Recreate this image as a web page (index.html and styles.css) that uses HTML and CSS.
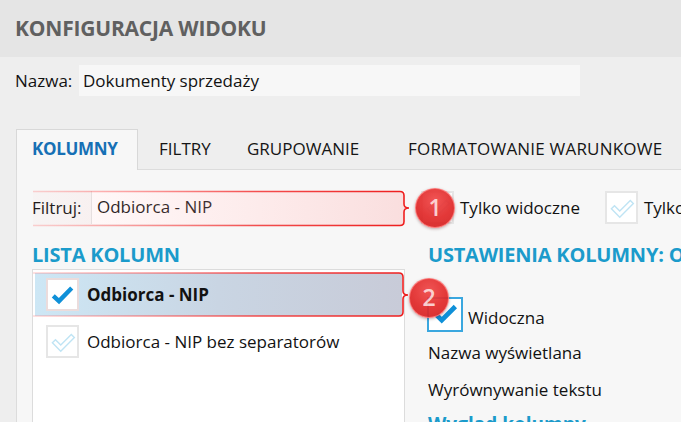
FILE: index.html
```html
<!DOCTYPE html>
<html lang="pl">
<head>
<meta charset="utf-8">
<title>Konfiguracja widoku</title>
<link rel="stylesheet" href="styles.css">
</head>
<body>
<div class="header"><h1 class="title">KONFIGURACJA WIDOKU</h1></div>

<div class="name-row">
  <span class="name-label">Nazwa:</span>
  <div class="name-input">Dokumenty sprzedaży</div>
</div>

<div class="tabs">
  <div class="tab tab-active">KOLUMNY</div>
  <div class="tab tab-2">FILTRY</div>
  <div class="tab tab-3">GRUPOWANIE</div>
  <div class="tab tab-4">FORMATOWANIE WARUNKOWE</div>
</div>

<div class="panel">
  <div class="grid">
    <div class="filter">
      <span class="filter-label">Filtruj:</span>
      <div class="filter-input">Odbiorca - NIP</div>
    </div>
    <div class="opts">
      <span class="cb cb-off"><svg viewBox="0 0 33 33" width="29" height="29"><polygon points="5,18 8.5,14.5 14.5,20.5 26.5,8.5 30,12 14.5,27.5" class="hollow"/></svg></span>
      <span class="opt-text">Tylko widoczne</span>
      <span class="cb cb-off cb-second"><svg viewBox="0 0 33 33" width="29" height="29"><polygon points="5,18 8.5,14.5 14.5,20.5 26.5,8.5 30,12 14.5,27.5" class="hollow"/></svg></span>
      <span class="opt-text">Tylko</span>
    </div>

    <h2 class="section">LISTA KOLUMN</h2>
    <h2 class="section section-right">USTAWIENIA KOLUMNY: ODBIORCA - NIP</h2>

    <div class="list">
      <div class="row row-selected">
        <span class="cb cb-on"><svg viewBox="0 0 33 33" width="29" height="29"><polyline points="6,18 12.5,24 27,9" class="solid"/></svg></span>
        <span class="row-text row-text-bold">Odbiorca - NIP</span>
      </div>
      <div class="row row-plain">
        <span class="cb cb-off"><svg viewBox="0 0 33 33" width="29" height="29"><polygon points="5,18 8.5,14.5 14.5,20.5 26.5,8.5 30,12 14.5,27.5" class="hollow"/></svg></span>
        <span class="row-text">Odbiorca - NIP bez separatorów</span>
      </div>
    </div>

    <div class="settings">
      <div class="set-check">
        <span class="cb cb-blue"><svg viewBox="0 0 33 33" width="31" height="31"><polyline points="7,17 12.5,22.5 27,8" class="solid"/></svg></span>
        <span class="opt-text set-check-text">Widoczna</span>
      </div>
      <div class="set-line">Nazwa wyświetlana</div>
      <div class="set-line">Wyrównywanie tekstu</div>
      <h3 class="subsection">Wygląd kolumny</h3>
    </div>
  </div>

  <svg class="mark mark-1" width="382" height="40" viewBox="0 0 382 40">
    <defs>
      <linearGradient id="stroke1" x1="0" x2="1" y1="0" y2="0">
        <stop offset="0" stop-color="#ff5a5a" stop-opacity="0.25"/>
        <stop offset="0.6" stop-color="#f23030" stop-opacity="0.85"/>
        <stop offset="1" stop-color="#ee1c1c"/>
      </linearGradient>
      <linearGradient id="fill1" x1="0" x2="1" y1="0" y2="0">
        <stop offset="0" stop-color="#ffb5b5" stop-opacity="0.05"/>
        <stop offset="1" stop-color="#f0a0a0" stop-opacity="0.35"/>
      </linearGradient>
    </defs>
    <path d="M0 1.5 H367 Q371 1.5 371 5.5 V14 Q371 18 376 18 Q371 18 371 22 V31.5 Q371 35.5 367 35.5 H0" fill="url(#fill1)" stroke="url(#stroke1)" stroke-width="1.6"/>
  </svg>

  <svg class="mark mark-2" width="382" height="48" viewBox="0 0 382 48">
    <path d="M0 2 H366 Q370 2 370 6 V20 Q370 24 375 24 Q370 24 370 28 V41 Q370 45 366 45 H0" fill="none" stroke="url(#stroke1)" stroke-width="1.6"/>
  </svg>

  <div class="callout callout-1">1</div>
  <div class="callout callout-2">2</div>
</div>
</body>
</html>
```

FILE: styles.css
```css
* { box-sizing: border-box; }

html, body {
  margin: 0;
  width: 681px;
  height: 422px;
  overflow: hidden;
}

body {
  background: #eeeeee;
  font-family: "Open Sans", "Noto Sans", sans-serif;
  font-size: 17px;
  color: #121212;
}

.header {
  height: 57px;
  background: #e5e5e5;
  padding: 15px 0 0 15px;
}

.title {
  margin: 0;
  font-size: 21px;
  line-height: 26px;
  font-weight: 700;
  color: #606060;
  letter-spacing: -0.2px;
}

.name-row {
  display: flex;
  align-items: center;
  height: 31px;
  margin-top: 8px;
  padding-left: 15px;
}

.name-label { width: 64px; }

.name-input {
  width: 501px;
  height: 31px;
  line-height: 31px;
  padding-left: 4px;
  background: #f7f7f7;
}

.tabs {
  display: grid;
  grid-template-columns: 122px 91px 161px auto;
  height: 40px;
  margin: 33px 0 0 16px;
}

.tab {
  line-height: 40px;
  font-size: 17px;
  white-space: nowrap;
  color: #151515;
}

.tab-active {
  position: relative;
  z-index: 1;
  height: 41px;
  line-height: 38px;
  padding-left: 15px;
  background: #f7f7f7;
  border: 1px solid #d8d8d8;
  border-bottom: none;
  color: #1670b5;
  font-weight: 700;
  letter-spacing: -0.3px;
}

.tab-2 { padding-left: 21px; }
.tab-3 { padding-left: 18px; }
.tab-4 { padding-left: 18px; letter-spacing: 0.2px; }

.panel {
  position: relative;
  height: 253px;
  margin-left: 16px;
  padding: 21px 0 0 15px;
  background: #f7f7f7;
  border-top: 1px solid #dcdcdc;
  border-left: 1px solid #dcdcdc;
}

.grid {
  display: grid;
  grid-template-columns: 373px 1fr;
  column-gap: 21px;
}

.filter {
  display: flex;
  align-items: center;
  height: 33px;
}

.filter-label { width: 59px; }

.filter-input {
  flex: 1;
  height: 33px;
  line-height: 32px;
  padding-left: 5px;
  background: #fff;
  border-left: 1px solid #e4e4e4;
}

.opts {
  display: flex;
  align-items: center;
  height: 33px;
  margin-left: -5px;
  white-space: nowrap;
}

.cb {
  display: flex;
  align-items: center;
  justify-content: center;
  flex: none;
  width: 33px;
  height: 33px;
  background: #fff;
  border: 2px solid #e6e6e6;
}

.cb-second { margin-left: 25px; }

.opt-text { margin-left: 6px; }

.hollow {
  fill: #fff;
  stroke: #bfe4f4;
  stroke-width: 1.6;
  stroke-linejoin: miter;
}

.solid {
  fill: none;
  stroke: #0f90d8;
  stroke-width: 5;
}

.section {
  margin: 17px 0 0;
  font-size: 20px;
  line-height: 28px;
  font-weight: 700;
  color: #1b9bcb;
  white-space: nowrap;
  letter-spacing: -0.2px;
}

.section-right { margin-left: 2px; }

.list {
  height: 200px;
  padding: 3px 2px;
  background: #fff;
  border: 1px solid #dcdcdc;
}

.row {
  display: flex;
  align-items: center;
  height: 45px;
  padding-left: 11px;
}

.row-plain { margin-top: 3px; height: 44px; }

.row-selected {
  height: 43px;
  background: linear-gradient(90deg, #cde7f5 0%, #c9d5e3 50%, #c8cbd8 100%);
}

.row-selected .cb { border-color: #ebdcdc; }

.row-text { margin-left: 8px; white-space: nowrap; }
.row-text-bold { font-weight: 700; }

.settings { padding-left: 2px; }

.set-check {
  display: flex;
  align-items: center;
  margin-top: 28px;
  margin-left: -1px;
}

.cb-blue {
  width: 36px;
  height: 35px;
  border: 2px solid #3aa7df;
}

.set-check-text { margin-left: 5px; padding-top: 5px; }

.set-line {
  line-height: 37px;
  white-space: nowrap;
}

.set-check + .set-line { margin-top: 2px; }

.subsection {
  margin: 3px 0 0;
  font-size: 19px;
  line-height: 27px;
  font-weight: 700;
  color: #1b9bcb;
}

.mark {
  position: absolute;
  left: 16px;
  pointer-events: none;
}

.mark-1 { top: 20px; }
.mark-2 { top: 101px; }

.callout {
  position: absolute;
  width: 40px;
  height: 40px;
  border-radius: 50%;
  background: radial-gradient(circle at 50% 30%, #f04848 0%, #e12a2a 55%, #d21f1f 100%);
  border: 1.5px solid rgba(255, 120, 120, 0.9);
  box-shadow: 0 1px 3px rgba(80, 0, 0, 0.35);
  opacity: 0.93;
  color: rgba(255, 225, 225, 0.9);
  font-size: 23px;
  font-weight: 600;
  line-height: 37px;
  text-align: center;
}

.callout-1 { left: 398px; top: 18px; }
.callout-2 { left: 392px; top: 108px; }
```
